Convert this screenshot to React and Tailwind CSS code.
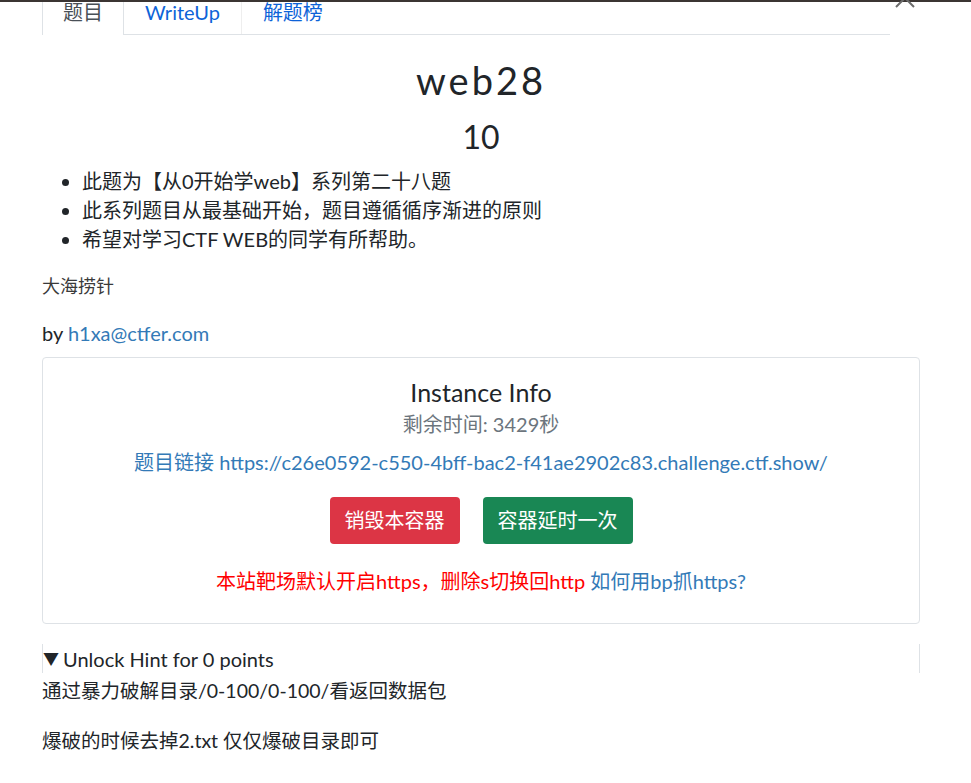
const FONT = { fontFamily: 'Lato, "Noto Sans CJK SC", sans-serif' };

function Tabs() {
  return (
    <div className="flex ml-[42px] w-[848px] border-b border-[#dee2e6] text-[20px] leading-[20px]">
      <div className="px-5 pt-0 pb-[12px] border-x border-[#dee2e6] bg-white text-[#495057] -mb-px">题目</div>
      <div className="px-[21px] pt-0 pb-[12px] border-r border-[#eeeeee] text-[#0d63d8]">WriteUp</div>
      <div className="px-[21px] pt-0 pb-[12px] text-[#0d63d8]">解题榜</div>
    </div>
  );
}

function InstanceCard() {
  return (
    <div className="mt-[10px] border border-[#dee2e6] rounded-[4px] text-center pt-[20px] pb-[28px]">
      <div className="text-[25px] leading-[29px] text-[#212529]">Instance Info</div>
      <div className="text-[20px] leading-[27px] text-[#6c757d] mt-[4px]">剩余时间: 3429秒</div>
      <div className="text-[20px] leading-[27px] text-[#337ab7] mt-[11px]">
        题目链接 https://c26e0592-c550-4bff-bac2-f41ae2902c83.challenge.ctf.show/
      </div>
      <div className="flex justify-center gap-[23px] mt-[21px]">
        <button className="bg-[#dc3545] text-white text-[20px] leading-[27px] px-[15px] py-[10px] rounded-[4px]">销毁本容器</button>
        <button className="bg-[#198754] text-white text-[20px] leading-[27px] px-[15px] py-[10px] rounded-[4px]">容器延时一次</button>
      </div>
      <div className="text-[20px] leading-[27px] mt-[24px]">
        <span className="text-[#ff0000]">本站靶场默认开启https，删除s切换回http</span>{' '}
        <span className="text-[#337ab7]">如何用bp抓https?</span>
      </div>
    </div>
  );
}

export default function App() {
  return (
    <div className="relative w-[971px] h-[783px] overflow-hidden bg-white text-[#212529]" style={FONT}>
      <div className="h-[2px] bg-[#3b3533]" />
      <svg className="absolute left-[895px] top-[-12px]" width="20" height="20" viewBox="0 0 20 20">
        <path d="M1 1 L19 19 M19 1 L1 19" stroke="#6b6b6b" strokeWidth="2" fill="none" />
      </svg>
      <Tabs />
      <div className="ml-[42px] w-[878px]">
        <h1 className="text-center text-[38px] leading-[48px] tracking-[3px] mt-[21px]">web28</h1>
        <h2 className="text-center text-[32px] leading-[38px] mt-[14px]">10</h2>
        <ul className="list-disc pl-[40px] mt-[11px] text-[20px] leading-[29px]">
          <li>此题为【从0开始学web】系列第二十八题</li>
          <li>此系列题目从最基础开始，题目遵循循序渐进的原则</li>
          <li>希望对学习CTF WEB的同学有所帮助。</li>
        </ul>
        <p className="text-[18px] leading-[27px] text-[#3a3a3a] mt-[19px]">大海捞针</p>
        <p className="text-[20px] leading-[27px] mt-[20px]">
          by <span className="text-[#337ab7]">h1xa@ctfer.com</span>
        </p>
        <InstanceCard />
        <div className="mt-[20px] border-x border-[#dee2e6] h-[29px] flex items-center text-[20px]">
          <span className="text-[16px] mr-[4px]">▼</span>Unlock Hint for 0 points
        </div>
        <p className="text-[19.5px] leading-[27px] mt-[4px]">通过暴力破解目录/0-100/0-100/看返回数据包</p>
        <p className="text-[19.5px] leading-[27px] mt-[23px]">爆破的时候去掉2.txt 仅仅爆破目录即可</p>
      </div>
    </div>
  );
}
